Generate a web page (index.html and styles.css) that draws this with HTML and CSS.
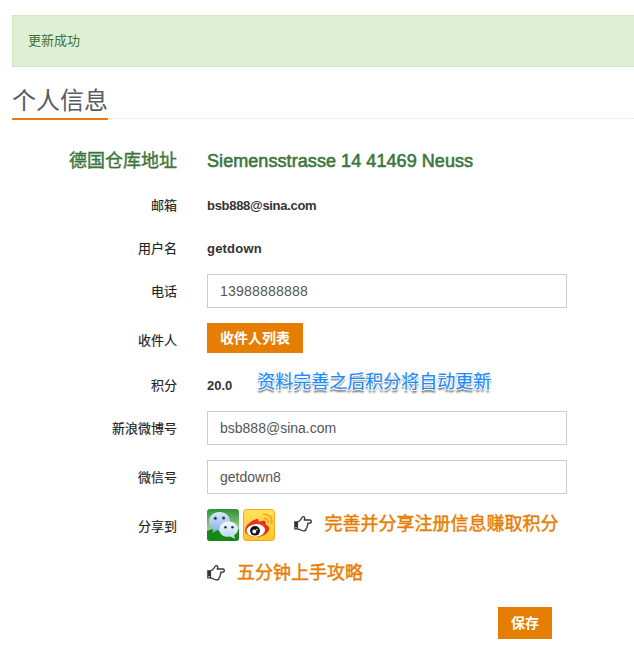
FILE: index.html
```html
<!DOCTYPE html>
<html lang="zh-CN">
<head>
<meta charset="utf-8">
<title>个人信息</title>
<link rel="stylesheet" href="styles.css">
</head>
<body>
<svg class="defs" width="0" height="0" aria-hidden="true">
  <symbol id="hand" viewBox="0 0 18 16">
    <path d="M.2 5.200h3.900v8.300H.2z" fill="#333"/>
    <path d="M4 5.600C5.500 5.400 6.200 4.200 7.200 2.900C7.900 1.900 8 .7 9.100.7C10.700.7 11 2 10.600 3.100L10.200 4H15.700C17.900 4 17.900 7.200 15.700 7.200H13.600C14.200 8.400 13.900 9.500 13.100 10.100C13.300 11.200 13 12 12.200 12.500C12.300 14.300 11.100 14.900 9.500 14.900C7.300 14.900 6.100 13.100 4 13.100" fill="none" stroke="#333" stroke-width="1.300" stroke-linejoin="round"/>
    <circle cx="2" cy="11.700" r=".7" fill="#fff"/>
  </symbol>
</svg>
<div class="alert">更新成功</div>
<div class="headline"><h2>个人信息</h2></div>
<form class="form">
  <div class="row address"><label>德国仓库地址</label><div class="field">Siemensstrasse 14 41469 Neuss</div></div>
  <div class="row"><label>邮箱</label><div class="field strong mail">bsb888@sina.com</div></div>
  <div class="row user"><label>用户名</label><div class="field strong name">getdown</div></div>
  <div class="row"><label>电话</label><input class="control phone" type="text" value="13988888888"></div>
  <div class="row recipient"><label>收件人</label><button class="btn" type="button">收件人列表</button></div>
  <div class="row"><label>积分</label><div class="field strong points">20.0</div><span class="note">资料完善之后积分将自动更新</span></div>
  <div class="row weibo"><label>新浪微博号</label><input class="control" type="text" value="bsb888@sina.com"></div>
  <div class="row wechat"><label>微信号</label><input class="control" type="text" value="getdown8"></div>
  <div class="row share"><label>分享到</label>
    <svg class="social" viewBox="0 0 32 32">
      <defs>
        <linearGradient id="green" x2="0" y2="1"><stop stop-color="#2f8f38"/><stop offset=".7" stop-color="#a5d89d"/></linearGradient>
        <linearGradient id="bubble" x2="0" y2="1"><stop stop-color="#d5e8fa"/><stop offset="1" stop-color="#86aee2"/></linearGradient>
        <linearGradient id="bubble2" x2="0" y2="1"><stop stop-color="#f5fbff"/><stop offset="1" stop-color="#b4d3ec"/></linearGradient>
      </defs>
      <rect width="32" height="32" rx="3" fill="url(#green)"/>
      <path d="M0 22Q7 18 13 22T32 20V29Q32 32 29 32H3Q0 32 0 29Z" fill="#158817"/>
      <path d="M12.500 3C6.400 3 2 7 2 12.300C2 15.600 3.600 18.200 6.200 19.900L5.400 24L9.600 21.200C17 22.800 23 18.500 23 12.300C23 7 18.600 3 12.500 3Z" fill="url(#bubble)"/>
      <path d="M21.500 12.500C16.200 12.500 12.300 16 12.300 20.400C12.300 25.300 17.500 29 23.400 27.500L28 30L27.100 26.200C29.500 24.700 31 22.700 31 20.200C31 15.800 26.800 12.500 21.500 12.500Z" fill="url(#bubble2)"/>
      <g fill="#263e50"><circle cx="8.300" cy="9.200" r="1.500"/><circle cx="16.600" cy="9" r="1.500"/><circle cx="18.500" cy="18.300" r="1.300"/><circle cx="25.500" cy="18.300" r="1.300"/></g>
    </svg>
    <svg class="social" viewBox="0 0 32 32">
      <defs><linearGradient id="gold" x2="0" y2="1"><stop stop-color="#ffe45c"/><stop offset="1" stop-color="#ffc524"/></linearGradient></defs>
      <rect x=".5" y=".5" width="31" height="31" rx="3" fill="url(#gold)" stroke="#f5a623"/>
      <path d="M12.500 10.500C14.500 9.300 16.200 10.500 15.700 12.700C18.500 11.500 22 11 22.800 13C23.200 14.100 22.500 15.100 22.500 15.500C25.800 16.500 27 19 25.700 21.500C23.500 26 17 28.700 10.500 27.900C5 27.200 1.500 24 2.100 20.200C2.800 16 8.500 11.500 12.500 10.500Z" fill="#e5341e"/>
      <ellipse cx="12.800" cy="21.400" rx="9.200" ry="6.300" fill="#fff" transform="rotate(-5 13 21)"/>
      <ellipse cx="12" cy="21.800" rx="5" ry="4.800" fill="#111"/>
      <circle cx="11.300" cy="22.500" r="2" fill="#fff"/><circle cx="14" cy="20.600" r=".8" fill="#fff"/>
      <path d="M21 5.300C26.500 5 30 9.500 28.500 14.500M21.300 9.500C24 9.300 25.700 11.300 25 13.800" fill="none" stroke="#f5a623" stroke-width="1.800" stroke-linecap="round"/>
    </svg>
    <svg class="hand"><use href="#hand"/></svg><a class="link">完善并分享注册信息赚取积分</a>
  </div>
  <div class="row guide"><label></label><svg class="hand"><use href="#hand"/></svg><a class="link">五分钟上手攻略</a></div>
  <div class="row actions"><button class="btn save" type="button">保存</button></div>
</form>
</body>
</html>
```
FILE: styles.css
```css
* { box-sizing: border-box; }
body {
  margin: 0;
  padding: 15px 0 0 12px;
  width: 634px;
  height: 652px;
  overflow: hidden;
  background: #fff;
  color: #222;
  font: 13px/20px "Liberation Sans", "Noto Sans CJK SC", sans-serif;
}
.defs { display: none; }
.alert {
  height: 52px;
  padding: 15px;
  border: 1px solid #d1e7c2;
  border-right: 0;
  background: #dfefd6;
  color: #3a733d;
}
.headline { display: flex; height: 52px; border-bottom: 1px dotted #e4e7f2; }
h2 {
  margin: 16px 0 -1px;
  height: 37px;
  border-bottom: 2px solid #e67e04;
  color: #555b62;
  font-size: 24px;
  line-height: 35px;
  font-weight: 400;
}
.form { padding-top: 20px; }
.row { display: flex; align-items: center; height: 44px; }
.row label { width: 165px; margin-right: 30px; padding-top: 2px; text-align: right; flex: none; -webkit-text-stroke: .15px; }
.address { color: #3c763d; font-size: 18px; }
.address .field { -webkit-text-stroke: .6px; letter-spacing: .07px; }
.row.address label { padding-top: 0; -webkit-text-stroke: .4px; }
.strong { padding-top: 2px; color: #333; font-weight: 700; }
.mail { letter-spacing: -.3px; }
.name { letter-spacing: .2px; }
.user, .weibo { height: 42px; }
.control {
  width: 360px;
  height: 34px;
  padding: 6px 12px;
  border: 1px solid #ccc;
  color: #555;
  background: #fff;
  font: 14px/20px "Liberation Sans", "Noto Sans CJK SC", sans-serif;
}
.phone { letter-spacing: .22px; }
.recipient { height: 50px; }
.row.recipient label { padding-top: 5px; }
.btn {
  width: 96px;
  height: 30px;
  padding: 0 0 2px;
  border: 0;
  background: #e67e04;
  color: #fff;
  font: 700 14px/20px "Noto Sans CJK SC", sans-serif;
}
.note {
  margin: -6px 0 0 25px;
  color: #218bfa;
  font-size: 18px;
  -webkit-text-stroke: .2px;
  text-shadow: 1px 0 #fff, -1px 0 #fff, 0 1px #fff, 0 -1px #fff, 1px 1px #fff, -1px 1px #fff, 0 2px 2px #555, 0 3px 2px #888;
}
.wechat { height: 56px; }
.share { height: 40px; }
.row.share label { padding-top: 4px; }
.social { width: 32px; height: 32px; margin-right: 4px; flex: none; }
.hand { width: 18px; height: 16px; flex: none; }
.share .hand { margin-left: 15px; margin-top: -2px; }
.link { margin-left: 12px; color: #e67e04; font-size: 18px; -webkit-text-stroke: .45px; white-space: nowrap; }
.share .link { margin: -3px 0 0 12.5px; }
.guide { height: 56px; }
.actions { padding-left: 486px; }
.save { width: 54px; height: 32px; }
```
